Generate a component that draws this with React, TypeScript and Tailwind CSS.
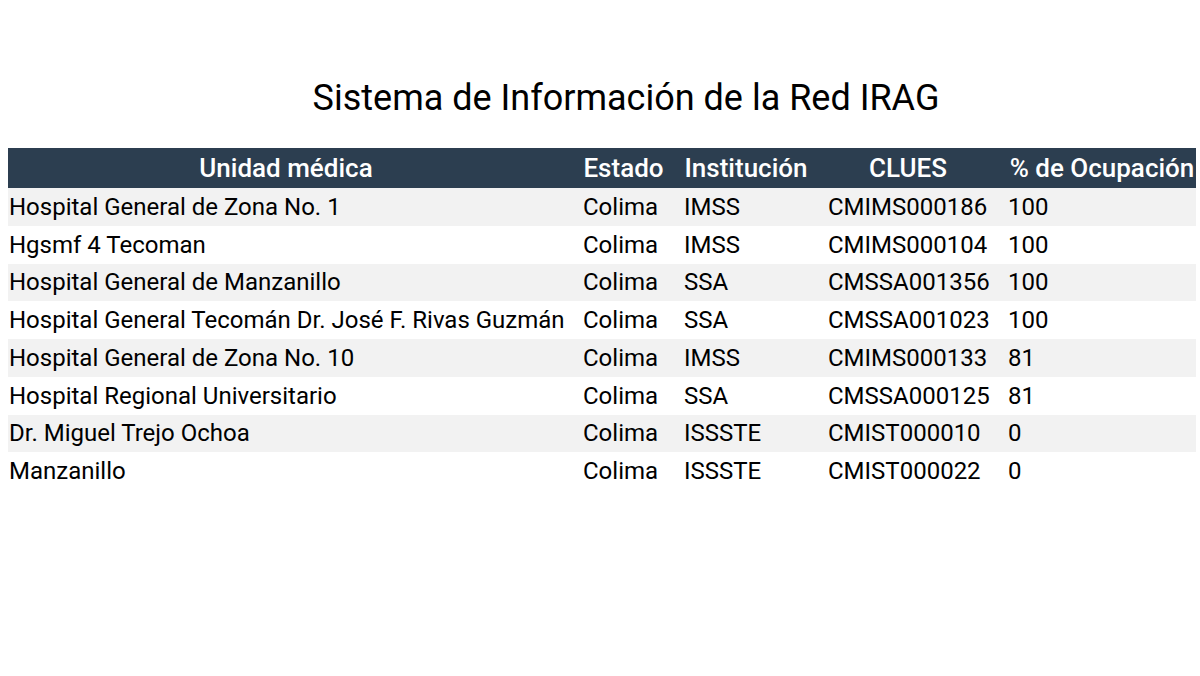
const rows = [
  ["Hospital General de Zona No. 1", "Colima", "IMSS", "CMIMS000186", "100"],
  ["Hgsmf 4 Tecoman", "Colima", "IMSS", "CMIMS000104", "100"],
  ["Hospital General de Manzanillo", "Colima", "SSA", "CMSSA001356", "100"],
  ["Hospital General Tecomán Dr. José F. Rivas Guzmán", "Colima", "SSA", "CMSSA001023", "100"],
  ["Hospital General de Zona No. 10", "Colima", "IMSS", "CMIMS000133", "81"],
  ["Hospital Regional Universitario", "Colima", "SSA", "CMSSA000125", "81"],
  ["Dr. Miguel Trejo Ochoa", "Colima", "ISSSTE", "CMIST000010", "0"],
  ["Manzanillo", "Colima", "ISSSTE", "CMIST000022", "0"],
];

const headers = ["Unidad médica", "Estado", "Institución", "CLUES", "% de Ocupación"];

// same column template for header and body so everything lines up
const cols = "grid grid-cols-[554px_81px_124px_160px_188px] gap-x-5 pl-[1px]";

export default function App() {
  return (
    <div className="w-[1200px] h-[676px] overflow-hidden bg-white text-black font-['Roboto',sans-serif]">
      {/* Title */}
      <div className="flex justify-center pl-[52px] pt-[74px] h-[148px]">
        <h1 className="text-[36px] leading-[48px] font-normal">Sistema de Información de la Red IRAG</h1>
      </div>

      {/* Table */}
      <div className="ml-[8px] w-[1188px]">
        <div className={`${cols} h-[40px] items-center bg-[#2c3e50] text-white text-[26px] font-medium`}>
          {headers.map((h) => (
            <div key={h} className="text-center whitespace-nowrap">
              {h}
            </div>
          ))}
        </div>

        {rows.map((r, i) => (
          <div
            key={r[3]}
            className={`${cols} h-[37.75px] items-center text-[24px] ${i % 2 === 0 ? "bg-[#f2f2f2]" : "bg-white"}`}
          >
            {r.map((c, j) => (
              <div key={j} className="whitespace-nowrap">
                {c}
              </div>
            ))}
          </div>
        ))}
      </div>
    </div>
  );
}
